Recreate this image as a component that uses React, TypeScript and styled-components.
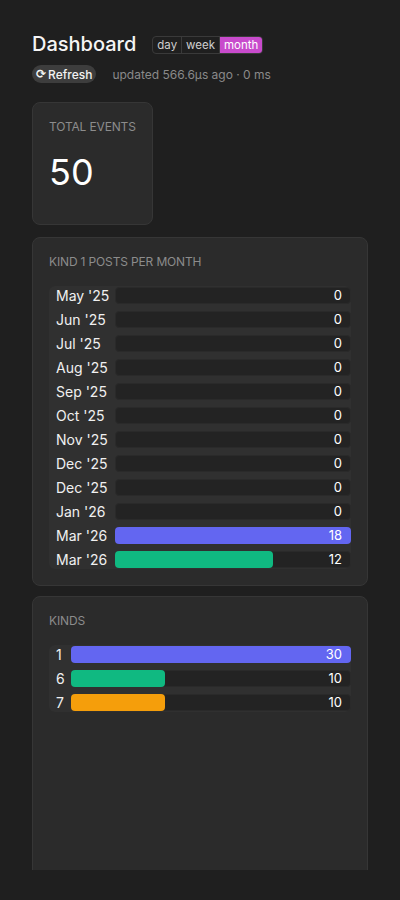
import React from "react";
import styled, { createGlobalStyle } from "styled-components";

const Global = createGlobalStyle`
  html, body { margin: 0; padding: 0; background: #1f1f1f; }
  body { font-family: Inter, "Noto Sans", "DejaVu Sans", sans-serif; color: #f2f2f2; }
  * { box-sizing: border-box; }
`;

const Page = styled.div`
  height: 900px;
  padding: 32px 32px 30px;
  display: flex;
  flex-direction: column;
  overflow: hidden;
`;

const Header = styled.header`
  display: flex;
  flex-direction: column;
  gap: 8px;
  margin-bottom: 19px;
`;

const TitleRow = styled.div`
  display: flex;
  align-items: center;
  gap: 16px;
`;

const Title = styled.h1`
  margin: 0;
  font-size: 20px;
  line-height: 25px;
  font-weight: 500;
  color: #f5f5f5;
`;

const Segmented = styled.div`
  display: flex;
  border: 1px solid #3a3a3a;
  border-radius: 4px;
  overflow: hidden;
  height: 18px;
`;

const Segment = styled.button<{ $active?: boolean }>`
  all: unset;
  font-family: Inter, sans-serif;
  font-size: 11.5px;
  line-height: 16px;
  padding: 0 4px;
  color: ${(p) => (p.$active ? "#ffffff" : "#cfcfcf")};
  background: ${(p) => (p.$active ? "#c84bcc" : "transparent")};
  & + & { border-left: 1px solid #3a3a3a; }
`;

const MetaRow = styled.div`
  display: flex;
  align-items: center;
  gap: 16px;
`;

const RefreshButton = styled.button`
  all: unset;
  display: inline-flex;
  align-items: center;
  gap: 2px;
  height: 18px;
  padding: 0 4px;
  border-radius: 9px;
  background: #3d3d3d;
  color: #f2f2f2;
  font-family: Inter, sans-serif;
  font-size: 12px;
  font-weight: 500;
`;

const RefreshIcon = styled.span`
  font-family: "DejaVu Sans", sans-serif;
  font-size: 12px;
  font-weight: 700;
`;

const Updated = styled.span`
  font-size: 12px;
  color: #8a8a8a;
`;

const Cards = styled.div`
  display: flex;
  flex-direction: column;
  align-items: flex-start;
  gap: 10px;
  flex: 1;
  min-height: 0;
  overflow: hidden;
`;

const Card = styled.section<{ $fill?: boolean; $tall?: boolean; $spaced?: boolean }>`
  background: #2b2b2b;
  border: 1px solid #363636;
  border-radius: 8px;
  padding: 16px;
  align-self: ${(p) => (p.$fill ? "stretch" : "flex-start")};
  flex-shrink: 0;
  margin-bottom: ${(p) => (p.$spaced ? "2px" : "0")};
  min-height: ${(p) => (p.$tall ? "400px" : "0")};
`;

const CardLabel = styled.div`
  font-size: 12px;
  color: #8c8c8c;
  text-transform: uppercase;
  letter-spacing: -0.15px;
`;

const BigNumber = styled.div`
  font-size: 36px;
  font-weight: 400;
  color: #ffffff;
  margin-top: 16px;
  margin-bottom: 14px;
  line-height: 44px;
`;

const BarList = styled.div`
  margin-top: 17px;
  display: grid;
  grid-template-columns: max-content 1fr;
  column-gap: 6px;
  row-gap: 7px;
  align-items: center;
  background: #303030;
  border-radius: 6px;
  padding: 1px 0 1px 7px;
`;

const BarLabel = styled.div`
  font-size: 14px;
  color: #f0f0f0;
  line-height: 17px;
`;

const Track = styled.div`
  position: relative;
  height: 17px;
  border-radius: 4px;
  background: #232323;
  border: 1px solid #2a2a2a;
  display: flex;
  align-items: center;
  justify-content: flex-end;
  padding-right: 8px;
`;

const Fill = styled.div<{ $color: string }>`
  position: absolute;
  left: -1px;
  top: -1px;
  bottom: -1px;
  border-radius: 4px;
  background: ${(p) => p.$color};
`;

const BarValue = styled.span`
  position: relative;
  font-size: 13px;
  color: #ffffff;
  line-height: 15px;
`;

type Bar = { label: string; value: number; color?: string };

const months: Bar[] = [
  { label: "May '25", value: 0 },
  { label: "Jun '25", value: 0 },
  { label: "Jul '25", value: 0 },
  { label: "Aug '25", value: 0 },
  { label: "Sep '25", value: 0 },
  { label: "Oct '25", value: 0 },
  { label: "Nov '25", value: 0 },
  { label: "Dec '25", value: 0 },
  { label: "Dec '25", value: 0 },
  { label: "Jan '26", value: 0 },
  { label: "Mar '26", value: 18, color: "#6366f1" },
  { label: "Mar '26", value: 12, color: "#10b981" },
];

const kinds: Bar[] = [
  { label: "1", value: 30, color: "#6366f1" },
  { label: "6", value: 10, color: "#10b981" },
  { label: "7", value: 10, color: "#f59e0b" },
];

function Bars({ items }: { items: Bar[] }) {
  const max = Math.max(...items.map((i) => i.value), 1);
  return (
    <BarList>
      {items.map((b, i) => (
        <React.Fragment key={i}>
          <BarLabel>{b.label}</BarLabel>
          <Track>
            {b.value > 0 && (
              <Fill
                $color={b.color || "#6366f1"}
                style={{ width: `calc(${(b.value / max) * 100}% + 2px)` }}
              />
            )}
            <BarValue>{b.value}</BarValue>
          </Track>
        </React.Fragment>
      ))}
    </BarList>
  );
}

export default function App() {
  return (
    <>
      <Global />
      <Page>
        <Header>
          <TitleRow>
            <Title>Dashboard</Title>
            <Segmented>
              <Segment>day</Segment>
              <Segment>week</Segment>
              <Segment $active>month</Segment>
            </Segmented>
          </TitleRow>
          <MetaRow>
            <RefreshButton>
              <RefreshIcon>⟳</RefreshIcon>Refresh
            </RefreshButton>
            <Updated>updated 566.6µs ago · 0 ms</Updated>
          </MetaRow>
        </Header>
        <Cards>
          <Card $spaced>
            <CardLabel>Total Events</CardLabel>
            <BigNumber>50</BigNumber>
          </Card>
          <Card $fill>
            <CardLabel>Kind 1 posts per month</CardLabel>
            <Bars items={months} />
          </Card>
          <Card $fill $tall>
            <CardLabel>Kinds</CardLabel>
            <Bars items={kinds} />
          </Card>
        </Cards>
      </Page>
    </>
  );
}
